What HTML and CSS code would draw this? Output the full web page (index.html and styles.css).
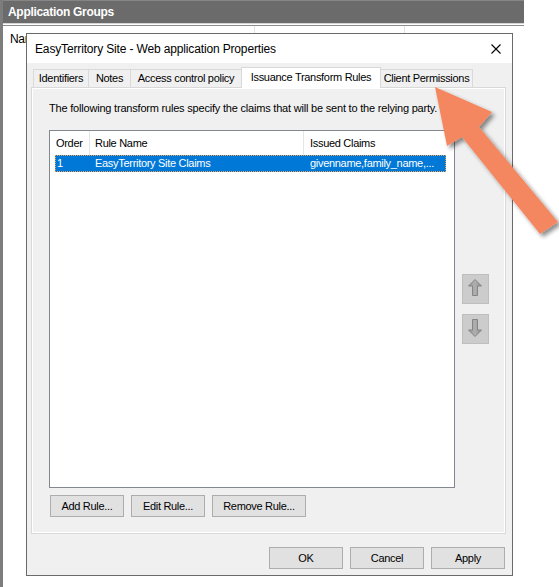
FILE: index.html
```html
<!DOCTYPE html>
<html>
<head>
<meta charset="utf-8">
<link rel="stylesheet" href="styles.css">
</head>
<body>
<div class="desk">
  <div class="bgwin">
    <div class="bgtitle">Application Groups</div>
    <div class="bgsep"></div>
    <div class="bghead">
      <div class="bgcol bgc1">Name</div>
      <div class="bgcol bgc2"></div>
      <div class="bgcol bgc3"></div>
    </div>
  </div>

  <div class="dialog">
    <div class="dtitle">
      <span class="dtitle-text">EasyTerritory Site - Web application Properties</span>
      <svg class="close" width="10" height="10" viewBox="0 0 10 10"><path d="M0.5 0.5 L9.5 9.5 M9.5 0.5 L0.5 9.5" stroke="#000" stroke-width="1.1" fill="none"/></svg>
    </div>
    <div class="dbody">
      <div class="tabs">
        <div class="tab t1">Identifiers</div>
        <div class="tab t2">Notes</div>
        <div class="tab t3">Access control policy</div>
        <div class="tab t4 active">Issuance Transform Rules</div>
        <div class="tab t5">Client Permissions</div>
      </div>
      <div class="panel">
        <p class="desc">The following transform rules specify the claims that will be sent to the relying party.</p>
        <div class="mainrow">
          <div class="list">
            <div class="lhead">
              <div class="hcell h1">Order</div>
              <div class="hcell h2">Rule Name</div>
              <div class="hcell h3">Issued Claims</div>
            </div>
            <div class="lrow sel">
              <div class="rcell r1">1</div>
              <div class="rcell r2">EasyTerritory Site Claims</div>
              <div class="rcell r3">givenname,family_name,...</div>
            </div>
          </div>
          <div class="movers">
            <div class="mv">
              <svg width="25" height="28" viewBox="0 0 25 28">
                <defs>
                  <linearGradient id="ga" x1="0" y1="0" x2="1" y2="0">
                    <stop offset="0" stop-color="#959595"/>
                    <stop offset="0.5" stop-color="#b0b0b0"/>
                    <stop offset="1" stop-color="#8a8a8a"/>
                  </linearGradient>
                </defs>
                <path d="M12 4.5 L18.5 11 L14.5 11 L14.5 20.5 L9.5 20.5 L9.5 11 L5.5 11 Z" fill="url(#ga)" stroke="#858585" stroke-width="1"/>
              </svg>
            </div>
            <div class="mv">
              <svg width="25" height="28" viewBox="0 0 25 28">
                <path d="M12 21.5 L18.5 15 L14.5 15 L14.5 4.5 L9.5 4.5 L9.5 15 L5.5 15 Z" fill="url(#ga)" stroke="#858585" stroke-width="1"/>
              </svg>
            </div>
          </div>
        </div>
        <div class="rulebtns">
          <div class="btn b-add">Add Rule...</div>
          <div class="btn b-edit">Edit Rule...</div>
          <div class="btn b-remove">Remove Rule...</div>
        </div>
      </div>
      <div class="footer">
        <div class="btn">OK</div>
        <div class="btn">Cancel</div>
        <div class="btn">Apply</div>
      </div>
    </div>
  </div>

  <svg class="callout" width="559" height="587" viewBox="0 0 559 587">
    <defs>
      <filter id="sh" x="-20%" y="-20%" width="140%" height="140%">
        <feDropShadow dx="3" dy="3" stdDeviation="2" flood-color="#000" flood-opacity="0.45"/>
      </filter>
    </defs>
    <polygon points="435,87 492,112 479,127 558,222 540,234 462,137 447,146" fill="#f4875e" filter="url(#sh)"/>
  </svg>
</div>
</body>
</html>
```
FILE: styles.css
```css
html, body {
  margin: 0;
  padding: 0;
  background: #ffffff;
}

.desk {
  position: relative;
  width: 559px;
  height: 587px;
  overflow: hidden;
  font-family: "Liberation Sans", Arial, sans-serif;
  font-size: 11px;
  letter-spacing: -0.3px;
  color: #000;
}

/* background MMC window */
.bgwin {
  width: 524px;
  height: 587px;
  box-sizing: border-box;
  border-left: 3px solid #7d7d7d;
  background: #fff;
}

.bgtitle {
  height: 23px;
  line-height: 23px;
  background: #6b6b6b;
  border-top: 1px solid #858585;
  box-sizing: border-box;
  color: #fff;
  font-weight: bold;
  font-size: 12px;
  padding-left: 5px;
}

.bgsep {
  height: 1px;
  border-top: 1px solid #d6d6d6;
  border-bottom: 1px solid #8c8c8c;
}

.bghead {
  display: flex;
  height: 24px;
}

.bgcol {
  box-sizing: border-box;
  border-right: 1px solid #e3e3e3;
  padding: 6px 0 0 7px;
  font-size: 12px;
}

.bgc1 { width: 252px; }
.bgc2 { width: 150px; }
.bgc3 { flex: 1; border-right: none; }

/* dialog */
.dialog {
  position: absolute;
  left: 26px;
  top: 33px;
  width: 487px;
  height: 543px;
  box-sizing: border-box;
  border: 1px solid #6a6a6a;
  background: #f0f0f0;
  display: flex;
  flex-direction: column;
}

.dtitle {
  height: 29px;
  background: #fff;
  display: flex;
  align-items: center;
  justify-content: space-between;
  padding: 0 11px 0 8px;
}

.dtitle-text {
  font-size: 12px;
  letter-spacing: -0.15px;
  color: #000;
}

.close {
  display: block;
}

.dbody {
  padding: 4px 6px 0 4px;
  display: flex;
  flex-direction: column;
}

.tabs {
  display: flex;
  align-items: flex-start;
  height: 20px;
  padding-left: 2px;
}

.tab {
  box-sizing: border-box;
  height: 18px;
  margin-top: 2px;
  border: 1px solid #d9d9d9;
  border-bottom: none;
  background: #f0f0f0;
  text-align: center;
  line-height: 17px;
  white-space: nowrap;
  margin-left: -1px;
}

.t1 { width: 56px; margin-left: 0; }
.t2 { width: 43px; }
.t3 { width: 112px; }
.t4 { width: 140px; }
.t5 { width: 93px; }

.tab.active {
  position: relative;
  z-index: 1;
  height: 21px;
  margin-top: 0;
  background: #fff;
  line-height: 19px;
}

.panel {
  box-sizing: border-box;
  width: 475px;
  height: 447px;
  border: 1px solid #d9d9d9;
  box-shadow: inset 1px 1px 0 #fff, inset -1px -1px 0 #fff;
  padding: 13px 0 0 17px;
  display: flex;
  flex-direction: column;
}

.desc {
  margin: 0;
  height: 14px;
  line-height: 14px;
  white-space: nowrap;
  letter-spacing: -0.2px;
}

.mainrow {
  margin-top: 15px;
  display: flex;
  align-items: flex-start;
}

.list {
  box-sizing: border-box;
  width: 406px;
  height: 358px;
  border: 1px solid #828790;
  background: #fff;
}

.lhead {
  display: flex;
  height: 24px;
}

.hcell {
  box-sizing: border-box;
  border-right: 1px solid #e5e5e5;
  line-height: 24px;
  white-space: nowrap;
}

.h1 { width: 40px; padding-left: 6px; }
.h2 { width: 214px; padding-left: 5px; }
.h3 { flex: 1; padding-left: 6px; border-right: none; }

.lrow {
  display: flex;
  margin-left: 5px;
  width: 391px;
  height: 17px;
  box-sizing: border-box;
}

.lrow.sel {
  background: #0078d7;
  color: #fff;
  outline: 1px dotted #f0a050;
  outline-offset: -1px;
}

.rcell {
  box-sizing: border-box;
  line-height: 17px;
  white-space: nowrap;
}

.r1 { width: 35px; padding-left: 2px; }
.r2 { width: 214px; padding-left: 5px; }
.r3 { flex: 1; padding-left: 6px; overflow: hidden; }

.movers {
  margin-left: 7px;
  padding-top: 144px;
  display: flex;
  flex-direction: column;
  gap: 10px;
}

.mv {
  box-sizing: border-box;
  width: 27px;
  height: 30px;
  background: #cccccc;
  border: 1px solid #bfbfbf;
}

.mv svg { display: block; }

.rulebtns {
  margin-top: 7px;
  margin-left: 1px;
  display: flex;
  gap: 7px;
}

.btn {
  box-sizing: border-box;
  height: 22px;
  width: 74px;
  border: 1px solid #adadad;
  background: #e1e1e1;
  text-align: center;
  line-height: 20px;
  white-space: nowrap;
}

.b-remove { width: 94px; }

.footer {
  margin-top: 13px;
  margin-right: 1px;
  display: flex;
  justify-content: flex-end;
  gap: 7px;
}

.callout {
  position: absolute;
  left: 0;
  top: 0;
  pointer-events: none;
}
```
